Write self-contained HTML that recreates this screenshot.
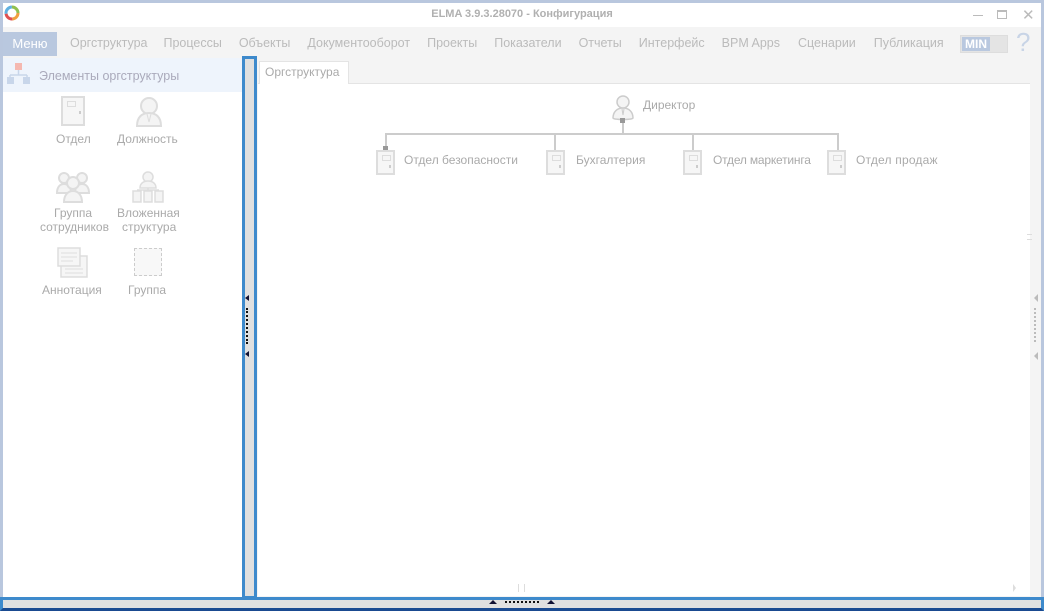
<!DOCTYPE html>
<html><head><meta charset="utf-8"><style>
*{margin:0;padding:0;box-sizing:border-box}
body{width:1044px;height:611px;overflow:hidden;background:#b9c7de;font-family:"Liberation Sans",sans-serif;position:relative}
.abs{position:absolute}
.t{color:#aaa;font-size:12px;white-space:nowrap}
.door{position:absolute;width:19px;height:25px;border:2px solid #ddd;background:#f6f6f6}
.door:before{content:"";position:absolute;left:4px;top:3px;width:7px;height:4px;border:1px solid #ddd}
.door:after{content:"";position:absolute;right:2px;top:13px;width:2px;height:3px;background:#ccc}
</style></head><body>
<div class="abs" style="left:3px;top:3px;width:1038px;height:605px;background:#fff"></div>
<svg class="abs" style="left:4px;top:5px" width="16" height="16" viewBox="0 0 16 16"><circle cx="8" cy="8" r="6" fill="none" stroke="#f0a040" stroke-width="3" stroke-dasharray="9 29"/><circle cx="8" cy="8" r="6" fill="none" stroke="#e05050" stroke-width="3" stroke-dasharray="0 9 9 20"/><circle cx="8" cy="8" r="6" fill="none" stroke="#60b0e0" stroke-width="3" stroke-dasharray="0 18 10 10"/><circle cx="8" cy="8" r="6" fill="none" stroke="#90c050" stroke-width="3" stroke-dasharray="0 28 10 0"/></svg>
<div class="abs t" style="left:0;width:1044px;top:8px;text-align:center;font-size:11px;color:#b0b0b0;font-weight:bold">ELMA 3.9.3.28070 - Конфигурация</div>
<div class="abs" style="left:973px;top:15px;width:10px;height:1px;background:#bbb"></div>
<div class="abs" style="left:997px;top:10px;width:10px;height:9px;border:1px solid #bbb;border-top-width:2px"></div>
<div class="abs t" style="left:1022px;top:6px;font-size:15px;color:#bbb">✕</div>
<div class="abs" style="left:3px;top:27px;width:1038px;height:31px;background:#f4f4f4"></div>
<div class="abs" style="left:3px;top:32px;width:54px;height:24px;background:#b9c8df;color:#fff;font-size:13px;text-align:center;line-height:24px">Меню</div>
<div class="abs t" style="left:70px;top:36px;font-size:12.5px;color:#bbb">
<span style="margin-right:16px">Оргструктура</span><span style="margin-right:17px">Процессы</span><span style="margin-right:17px">Объекты</span><span style="margin-right:17px">Документооборот</span><span style="margin-right:17px">Проекты</span><span style="margin-right:17px">Показатели</span><span style="margin-right:17px">Отчеты</span><span style="margin-right:17px">Интерфейс</span><span style="margin-right:18px">BPM Apps</span><span style="margin-right:18px">Сценарии</span><span>Публикация</span></div>
<div class="abs" style="left:960px;top:35px;width:48px;height:18px;background:#e4e4e4;border:1px solid #ddd"></div>
<div class="abs" style="left:962px;top:37px;width:28px;height:14px;background:#b9c8df;color:#fff;font-weight:bold;font-size:12px;line-height:14px;text-align:center">MIN</div>
<div class="abs" style="left:1016px;top:27px;color:#c8d4e6;font-size:26px">?</div>
<div class="abs" style="left:3px;top:58px;width:239px;height:34px;background:#eef4fc"></div>
<svg class="abs" style="left:7px;top:63px" width="24" height="22"><rect x="8" y="0" width="7" height="7" fill="#f5b8b0"/><path d="M11.5 7v5M3 12h17M3 12v3M20 12v3" stroke="#c8d6ea" stroke-width="1.5" fill="none"/><rect x="0" y="14" width="7" height="7" fill="#c8d6ea"/><rect x="16" y="14" width="7" height="7" fill="#c8d6ea"/></svg>
<div class="abs t" style="left:39px;top:69px;font-size:12.5px;color:#aab">Элементы оргструктуры</div>
<div class="door" style="left:61px;top:96px;width:24px;height:30px"></div>
<svg class="abs" style="left:134px;top:96px" width="30" height="32"><circle cx="15" cy="10" r="8" fill="#f4f4f4" stroke="#ddd" stroke-width="2"/><path d="M3 30c0-9 5-13 12-13s12 4 12 13z" fill="#f4f4f4" stroke="#ddd" stroke-width="2"/><path d="M13 18l2 8 2-8" stroke="#ddd" fill="none"/></svg>
<div class="abs t" style="left:56px;top:132px">Отдел</div>
<div class="abs t" style="left:117px;top:132px">Должность</div>
<svg class="abs" style="left:56px;top:171px" width="34" height="32"><g fill="#f4f4f4" stroke="#ddd" stroke-width="2"><circle cx="8" cy="7" r="5"/><circle cx="26" cy="7" r="5"/><path d="M1 22c0-6 3-9 7-9s7 3 7 9z"/><path d="M19 22c0-6 3-9 7-9s7 3 7 9z"/><circle cx="17" cy="12" r="6"/><path d="M8 31c0-7 4-11 9-11s9 4 9 11z"/></g></svg>
<svg class="abs" style="left:131px;top:171px" width="34" height="32"><g fill="#f4f4f4" stroke="#ddd" stroke-width="1.5"><circle cx="17" cy="6" r="5"/><path d="M9 17c0-5 4-7 8-7s8 2 8 7z"/><path d="M6 19h22M17 17v2" fill="none"/><rect x="2" y="20" width="8" height="11"/><rect x="13" y="20" width="8" height="11"/><rect x="24" y="20" width="8" height="11"/></g></svg>
<div class="abs t" style="left:54px;top:206px">Группа</div>
<div class="abs t" style="left:40px;top:220px">сотрудников</div>
<div class="abs t" style="left:117px;top:206px">Вложенная</div>
<div class="abs t" style="left:122px;top:220px">структура</div>
<svg class="abs" style="left:57px;top:247px" width="32" height="31"><rect x="4" y="9" width="26" height="21" fill="#f6f6f6" stroke="#ddd" stroke-width="1.5"/><rect x="1" y="1" width="22" height="18" fill="#f6f6f6" stroke="#ddd" stroke-width="1.5"/><path d="M4 6h16M4 10h16M4 14h12M8 22h18M8 26h18" stroke="#ddd"/></svg>
<div class="abs" style="left:134px;top:248px;width:28px;height:28px;border:1px dashed #ccc;background:#f8f8f8"></div>
<div class="abs t" style="left:42px;top:283px">Аннотация</div>
<div class="abs t" style="left:128px;top:283px">Группа</div>
<div class="abs" style="left:242px;top:56px;width:15px;height:543px;border:3px solid #3e8acc;background:#e0e0e0"></div>
<div class="abs" style="left:245px;top:295px;width:0;height:0;border:3px solid transparent;border-right:4px solid #113;border-left:0"></div>
<div class="abs" style="left:246px;top:308px;width:2px;height:36px;border-left:2px dotted #111"></div>
<div class="abs" style="left:245px;top:351px;width:0;height:0;border:3px solid transparent;border-right:4px solid #113;border-left:0"></div>
<div class="abs" style="left:257px;top:58px;width:784px;height:539px;background:#f4f4f4"></div>
<div class="abs" style="left:258px;top:83px;width:772px;height:1px;background:#e4e4e4"></div>
<div class="abs" style="left:259px;top:61px;width:90px;height:23px;background:#fff;border:1px solid #e4e4e4;border-bottom:none"></div>
<div class="abs t" style="left:265px;top:65px;font-size:12px">Оргструктура</div>
<div class="abs" style="left:258px;top:84px;width:772px;height:512px;background:#fff"></div>
<div class="abs" style="left:1027px;top:234px;width:5px;height:6px;border-top:1px solid #ddd;border-bottom:1px solid #ddd"></div>
<div class="abs" style="left:1034px;top:294px;border:4px solid transparent;border-right:4px solid #bbb;border-left:0"></div>
<div class="abs" style="left:1034px;top:308px;height:34px;border-left:2px dotted #bbb"></div>
<div class="abs" style="left:1034px;top:352px;border:4px solid transparent;border-right:4px solid #bbb;border-left:0"></div>
<div class="abs" style="left:518px;top:584px;width:7px;height:8px;border-left:1px solid #ddd;border-right:1px solid #ddd"></div>
<div class="abs" style="left:1013px;top:584px;border:4px solid transparent;border-left:3px solid #ddd;border-right:0"></div>
<svg class="abs" style="left:610px;top:94px" width="26" height="28"><g fill="#f4f4f4" stroke="#ccc" stroke-width="1.5"><path d="M3 24c0-6 4-10 10-10s10 4 10 10c0 2-20 2-20 0z"/><circle cx="13" cy="8" r="6"/></g><path d="M12 15l1 6 1-6" stroke="#ccc" fill="none"/></svg>
<div class="abs" style="left:620px;top:118px;width:5px;height:5px;background:#999"></div>
<div class="abs" style="left:622px;top:123px;width:2px;height:11px;background:#ccc"></div>
<div class="abs" style="left:385px;top:133px;width:454px;height:2px;background:#ccc"></div>
<div class="abs" style="left:385px;top:133px;width:2px;height:17px;background:#ccc"></div>
<div class="abs" style="left:383px;top:146px;width:5px;height:5px;background:#999"></div>
<div class="abs" style="left:554px;top:133px;width:2px;height:17px;background:#ccc"></div>
<div class="abs" style="left:692px;top:133px;width:2px;height:17px;background:#ccc"></div>
<div class="abs" style="left:837px;top:133px;width:2px;height:17px;background:#ccc"></div>
<div class="door" style="left:376px;top:150px"></div>
<div class="door" style="left:546px;top:150px"></div>
<div class="door" style="left:683px;top:150px"></div>
<div class="door" style="left:827px;top:150px"></div>
<div class="abs t" style="left:643px;top:98px">Директор</div>
<div class="abs t" style="left:404px;top:153px">Отдел безопасности</div>
<div class="abs t" style="left:576px;top:153px">Бухгалтерия</div>
<div class="abs t" style="left:713px;top:153px;letter-spacing:-0.2px">Отдел маркетинга</div>
<div class="abs t" style="left:856px;top:153px;letter-spacing:0.2px">Отдел продаж</div>
<div class="abs" style="left:0;top:597px;width:1044px;height:14px;border:3px solid #3e8acc;border-bottom-color:#1a4a90;background:#e0e0e0"></div>
<div class="abs" style="left:489px;top:600px;border:4px solid transparent;border-bottom:4px solid #113;border-top:0"></div>
<div class="abs" style="left:505px;top:601px;width:34px;border-top:2px dotted #111"></div>
<div class="abs" style="left:547px;top:600px;border:4px solid transparent;border-bottom:4px solid #113;border-top:0"></div>
</body></html>
